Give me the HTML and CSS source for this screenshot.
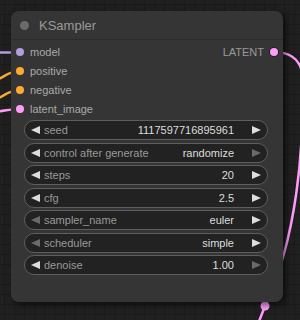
FILE: index.html
```html
<!DOCTYPE html>
<html lang="en">
<head>
    <meta charset="UTF-8">
    <title>KSampler</title>
    <link rel="stylesheet" href="styles.css">
</head>
<body>
    <div class="canvas">
        <svg class="links" width="300" height="320" viewBox="0 0 300 320">
            <path d="M-2,52.5 L20,52.5" stroke="#b39ddb"/>
            <path d="M-6,82 C4,76 11,71 20,71" stroke="#ffa931"/>
            <path d="M-6,101 C4,95 11,90 20,90" stroke="#ffa931"/>
            <path d="M-6,112 C4,111 11,109 20,109" stroke="#ff9cf9"/>
            <path d="M274,52 C288,52 299,58 302,72 C305,150 296,240 265,306 L258,324" stroke="#ff9cf9"/>
            <circle cx="265" cy="306" r="4.5" fill="#ff9cf9"/>
        </svg>

        <div class="node">
            <div class="title">
                <span class="title-dot"></span>
                <span class="title-text">KSampler</span>
            </div>
            <div class="body">
                <div class="slot-row">
                    <div class="slot"><span class="dot model"></span>model</div>
                    <div class="slot out">LATENT<span class="dot latent ring"></span></div>
                </div>
                <div class="slot-row">
                    <div class="slot"><span class="dot cond"></span>positive</div>
                </div>
                <div class="slot-row">
                    <div class="slot"><span class="dot cond"></span>negative</div>
                </div>
                <div class="slot-row">
                    <div class="slot"><span class="dot latent"></span>latent_image</div>
                </div>

                <div class="widgets">
                    <div class="widget">
                        <span class="arrow left"></span>
                        <span class="label">seed</span>
                        <span class="value">1117597716895961</span>
                        <span class="arrow right"></span>
                    </div>
                    <div class="widget">
                        <span class="arrow left"></span>
                        <span class="label">control after generate</span>
                        <span class="value">randomize</span>
                        <span class="arrow right off"></span>
                    </div>
                    <div class="widget">
                        <span class="arrow left"></span>
                        <span class="label">steps</span>
                        <span class="value">20</span>
                        <span class="arrow right"></span>
                    </div>
                    <div class="widget">
                        <span class="arrow left"></span>
                        <span class="label">cfg</span>
                        <span class="value">2.5</span>
                        <span class="arrow right"></span>
                    </div>
                    <div class="widget">
                        <span class="arrow left off"></span>
                        <span class="label">sampler_name</span>
                        <span class="value">euler</span>
                        <span class="arrow right"></span>
                    </div>
                    <div class="widget">
                        <span class="arrow left off"></span>
                        <span class="label">scheduler</span>
                        <span class="value">simple</span>
                        <span class="arrow right"></span>
                    </div>
                    <div class="widget">
                        <span class="arrow left"></span>
                        <span class="label">denoise</span>
                        <span class="value">1.00</span>
                        <span class="arrow right off"></span>
                    </div>
                </div>
            </div>
        </div>
    </div>
</body>
</html>
```

FILE: styles.css
```css
body { margin: 0; background: #1f1f1f; font-family: "Liberation Sans", Arial, sans-serif; }

.canvas {
    position: relative;
    width: 300px;
    height: 320px;
    overflow: hidden;
    background-color: #202020;
    background-image:
        linear-gradient(#1a1a1a 1px, transparent 1px),
        linear-gradient(90deg, #1a1a1a 1px, transparent 1px);
    background-size: 10px 10px;
    background-position: 4px 4px;
}

.links { position: absolute; left: 0; top: 0; fill: none; }
.links path { stroke-width: 2.5; fill: none; }

.node {
    position: absolute;
    left: 11px;
    top: 11px;
    width: 272px;
    height: 291px;
    background: #353535;
    border-radius: 8px;
    box-shadow: 3px 3px 6px rgba(0, 0, 0, 0.55);
}

.title {
    height: 28px;
    display: flex;
    align-items: center;
    border-bottom: 1px solid #2c2c2c;
}
.title-dot { width: 9px; height: 9px; border-radius: 50%; background: #6b6b6b; margin-left: 9px; }
.title-text { margin-left: 10px; font-size: 13px; color: #999; }

.body { padding-top: 2px; }

.slot-row { height: 19px; display: flex; justify-content: space-between; align-items: center; }
.slot { display: flex; align-items: center; font-size: 11px; color: #aaa; padding-left: 5px; }
.slot.out { padding-left: 0; padding-right: 5px; color: #999; }
.dot { width: 8px; height: 8px; border-radius: 50%; margin-right: 6px; }
.slot.out .dot { margin-right: 0; margin-left: 6px; }
.dot.model { background: #b39ddb; }
.dot.cond { background: #ffa931; }
.dot.latent { background: #ff9cf9; }
.dot.ring { box-shadow: 0 0 0 1px #222; }

.widgets { margin: 2px 15px 0 13px; display: flex; flex-direction: column; gap: 2.5px; }

.widget {
    height: 20px;
    box-sizing: border-box;
    display: flex;
    align-items: center;
    padding: 0 6px;
    border: 1px solid #5e5e5e;
    border-radius: 10px;
    background: #222;
    font-size: 11px;
}
.label { flex: 1; margin-left: 4px; color: #999; white-space: nowrap; }
.value { margin-right: 18px; color: #ddd; white-space: nowrap; }

.arrow { width: 0; height: 0; border-top: 4.5px solid transparent; border-bottom: 4.5px solid transparent; }
.arrow.left { border-right: 9px solid #ddd; }
.arrow.right { border-left: 9px solid #ddd; }
.arrow.left.off { border-right-color: #6a6a6a; }
.arrow.right.off { border-left-color: #6a6a6a; }
```
